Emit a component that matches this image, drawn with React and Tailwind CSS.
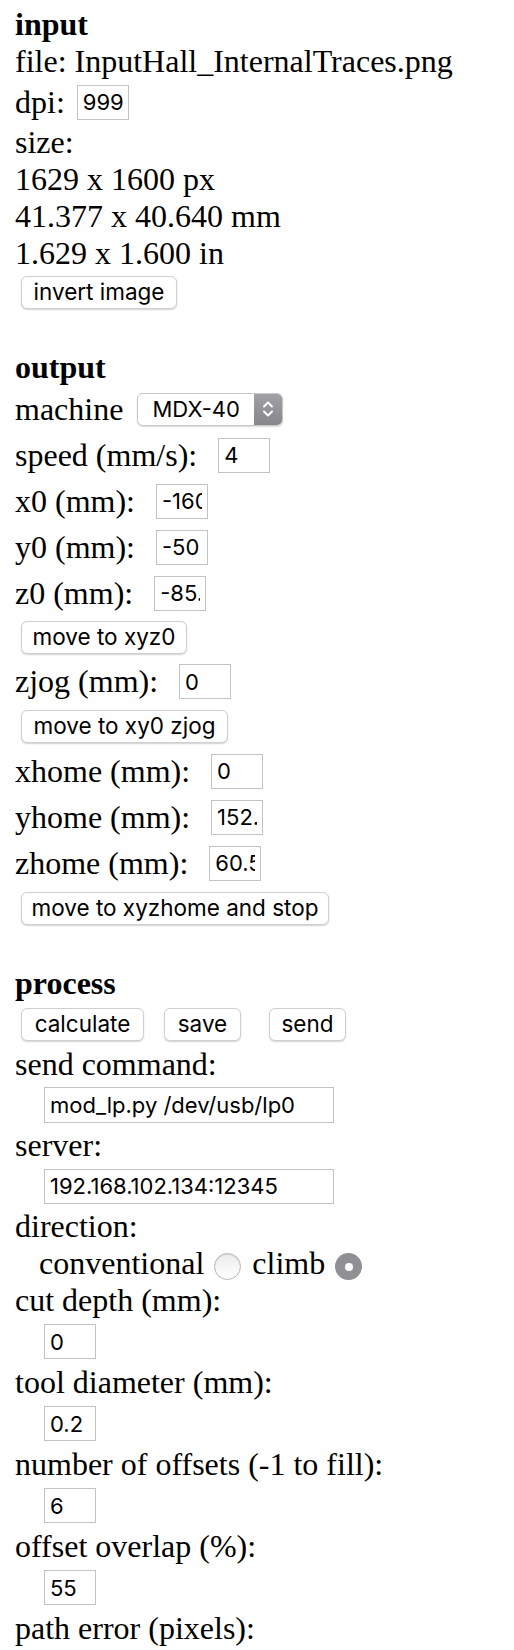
const serif = "font-['Liberation_Serif','Times_New_Roman',serif]";
const sans = "font-['Inter','Liberation_Sans',sans-serif]";

const Line = ({ children, bold }) => (
  <div className={`h-[37px] leading-[37px] whitespace-nowrap ${bold ? 'font-bold' : ''}`}>{children}</div>
);

const Box = ({ value, className = '' }) => (
  <input
    readOnly
    defaultValue={value}
    className={`h-[35px] border border-[#c3c3c3] bg-white px-[5px] text-[22px] text-black outline-none ${sans} ${className}`}
  />
);

const Field = ({ label, value, gap = 'ml-[21px]', h = 'h-[46px]' }) => (
  <div className={`flex items-center ${h}`}>
    <span className="leading-[37px] whitespace-nowrap">{label}</span>
    <Box value={value} className={`${gap} w-[52px]`} />
  </div>
);

const Btn = ({ children, className = '' }) => (
  <button
    className={`h-[33px] rounded-[6px] border border-[#d0d0d0] bg-white text-[22.5px] leading-none text-black shadow-[0_1px_1.5px_rgba(0,0,0,0.18)] ${sans} ${className}`}
  >
    {children}
  </button>
);

const BtnRow = ({ children, h = 'h-[44px]' }) => (
  <div className={`flex items-center ${h}`}>{children}</div>
);

const Indented = ({ children, h = 'h-[45px]' }) => (
  <div className={`flex items-center pl-[29px] ${h}`}>{children}</div>
);

const Chevrons = () => (
  <svg width="12" height="20" viewBox="0 0 12 20" fill="none" stroke="white" strokeWidth="2" strokeLinecap="round" strokeLinejoin="round">
    <path d="M2 7.5 L6 3.5 L10 7.5" />
    <path d="M2 12.5 L6 16.5 L10 12.5" />
  </svg>
);

const Radio = ({ checked }) =>
  checked ? (
    <span className="flex h-[27px] w-[27px] items-center justify-center rounded-full bg-[#8f8f94]">
      <span className="block h-[8px] w-[8px] rounded-full bg-white" />
    </span>
  ) : (
    <span className="block h-[27px] w-[27px] rounded-full border border-[#b5b5b5] bg-gradient-to-b from-[#ececec] to-white shadow-[inset_0_1px_1px_rgba(0,0,0,0.08)]" />
  );

export default function App() {
  return (
    <div className={`min-h-screen bg-white pl-[15px] pt-[6px] text-[32px] text-black ${serif}`}>
      {/* input */}
      <Line bold>input</Line>
      <Line>file: InputHall_InternalTraces.png</Line>
      <Field label="dpi:" value="999" gap="ml-[12px]" h="h-[44px]" />
      <Line>size:</Line>
      <Line>1629 x 1600 px</Line>
      <Line>41.377 x 40.640 mm</Line>
      <Line>1.629 x 1.600 in</Line>
      <BtnRow h="h-[40px]">
        <Btn className="ml-[6px] w-[156px]">invert image</Btn>
      </BtnRow>
      <div className="h-[37px]" />

      {/* output */}
      <Line bold>output</Line>
      <div className="flex h-[46px] items-center">
        <span className="leading-[37px]">machine</span>
        <div className={`ml-[14px] flex h-[33px] w-[146px] items-center overflow-hidden rounded-[6px] border border-[#c8c8c8] bg-white shadow-[0_1px_1.5px_rgba(0,0,0,0.15)] ${sans}`}>
          <span className="flex-1 pl-[14px] text-[22px] leading-none">MDX-40</span>
          <span className="flex h-full w-[28px] items-center justify-center bg-gradient-to-b from-[#a0a0a5] to-[#86868b]">
            <Chevrons />
          </span>
        </div>
      </div>
      <Field label="speed (mm/s):" value="4" />
      <Field label="x0 (mm):" value="-160" />
      <Field label="y0 (mm):" value="-50" />
      <Field label="z0 (mm):" value="-85.5" />
      <BtnRow h="h-[43px]">
        <Btn className="ml-[6px] w-[166px]">move to xyz0</Btn>
      </BtnRow>
      <Field label="zjog (mm):" value="0" h="h-[45px]" />
      <BtnRow>
        <Btn className="ml-[6px] w-[207px]">move to xy0 zjog</Btn>
      </BtnRow>
      <Field label="xhome (mm):" value="0" />
      <Field label="yhome (mm):" value="152.4" />
      <Field label="zhome (mm):" value="60.5" />
      <BtnRow>
        <Btn className="ml-[6px] w-[308px]">move to xyzhome and stop</Btn>
      </BtnRow>
      <div className="h-[35px]" />

      {/* process */}
      <Line bold>process</Line>
      <BtnRow>
        <Btn className="ml-[6px] w-[123px]">calculate</Btn>
        <Btn className="ml-[20px] w-[77px]">save</Btn>
        <Btn className="ml-[28px] w-[77px]">send</Btn>
      </BtnRow>
      <Line>send command:</Line>
      <Indented h="h-[44px]">
        <Box value="mod_lp.py /dev/usb/lp0" className="h-[36px] w-[290px]" />
      </Indented>
      <Line>server:</Line>
      <Indented h="h-[44px]">
        <Box value="192.168.102.134:12345" className="w-[290px]" />
      </Indented>
      <Line>direction:</Line>
      <div className="flex h-[37px] items-center pl-[24px]">
        <span className="leading-[37px]">conventional</span>
        <span className="ml-[10px] mt-[6px]"><Radio /></span>
        <span className="ml-[11px] leading-[37px]">climb</span>
        <span className="ml-[10px] mt-[6px]"><Radio checked /></span>
      </div>
      <Line>cut depth (mm):</Line>
      <Indented>
        <Box value="0" className="w-[52px]" />
      </Indented>
      <Line>tool diameter (mm):</Line>
      <Indented>
        <Box value="0.2" className="w-[52px]" />
      </Indented>
      <Line>number of offsets (-1 to fill):</Line>
      <Indented>
        <Box value="6" className="w-[52px]" />
      </Indented>
      <Line>offset overlap (%):</Line>
      <Indented>
        <Box value="55" className="w-[52px]" />
      </Indented>
      <Line>path error (pixels):</Line>
    </div>
  );
}
